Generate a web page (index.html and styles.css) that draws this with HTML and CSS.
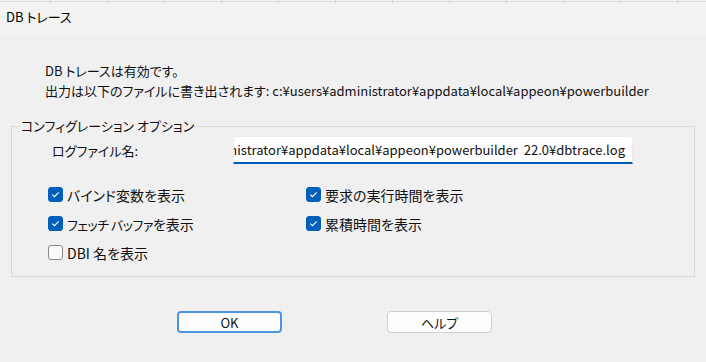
FILE: index.html
```html
<!DOCTYPE html>
<html lang="ja">
<head>
  <meta charset="UTF-8" />
  <title>DB トレース</title>
  <link rel="stylesheet" href="styles.css">
</head>
<body>
  <div class="ruler"></div>
  <div class="titlebar">DB トレース</div>

  <div class="message">
    <div>DB トレースは有効です。</div>
    <div>出力は以下のファイルに書き出されます: <span class="path">c:¥users¥administrator¥appdata¥local¥appeon¥powerbuilder</span></div>
  </div>

  <fieldset class="group">
    <legend>コンフィグレーション オプション</legend>

    <div class="field">
      <label class="field-label">ログファイル名:</label>
      <div class="textbox"><span>c:¥users¥administrator¥appdata¥local¥appeon¥powerbuilder&nbsp; 22.0¥dbtrace.log</span></div>
    </div>

    <div class="checks">
      <label class="check"><span class="box on"><svg viewBox="0 0 15 15"><path d="M3.8 7.6 L6.3 10 L11.2 5" /></svg></span><span>バインド変数を表示</span></label>
      <label class="check"><span class="box on"><svg viewBox="0 0 15 15"><path d="M3.8 7.6 L6.3 10 L11.2 5" /></svg></span><span>要求の実行時間を表示</span></label>
      <label class="check"><span class="box on"><svg viewBox="0 0 15 15"><path d="M3.8 7.6 L6.3 10 L11.2 5" /></svg></span><span><span class="kana">フェッチ バッファ</span>を表示</span></label>
      <label class="check"><span class="box on"><svg viewBox="0 0 15 15"><path d="M3.8 7.6 L6.3 10 L11.2 5" /></svg></span><span>累積時間を表示</span></label>
      <label class="check"><span class="box"></span><span>DBI 名を表示</span></label>
    </div>
  </fieldset>

  <div class="actions">
    <button class="btn default">OK</button>
    <button class="btn">ヘルプ</button>
  </div>
</body>
</html>
```

FILE: styles.css
```css
body {
  margin: 0;
  background: #f0f0f0;
  font-family: "Noto Sans CJK JP", "Noto Sans", sans-serif;
  font-size: 14px;
  font-feature-settings: "palt";
  color: #111;
  width: 706px;
  height: 362px;
  overflow: hidden;
}

/* strip of the window behind, with its column ticks */
.ruler {
  height: 3px;
  background:
    linear-gradient(#f3f3f3 0 1px, #dadada 1px 2px, #f3f3f3 2px 3px),
    #f3f3f3;
  position: relative;
}

.ruler::after {
  content: "";
  position: absolute;
  inset: 0;
  background: repeating-linear-gradient(90deg, transparent 0 50px, #d4d4d4 50px 51px, transparent 51px 57px);
}

.titlebar {
  height: 33px;
  box-sizing: border-box;
  padding: 5px 0 0 6px;
  font-size: 13px;
  line-height: 18px;
  background: #f3f3f3;
  color: #000;
}

.message {
  padding: 25px 0 0 45px;
  line-height: 20px;
  font-size: 13px;
}

.group {
  margin: 17px 0 0 11px;
  width: 684px;
  box-sizing: border-box;
  padding: 2px 10px 9px 8px;
  border: 1px solid #d9d9d9;
  min-width: 0;
}

.group legend {
  padding: 0 2px 0 1px;
  line-height: 16px;
  font-size: 13px;
}

.field {
  display: flex;
  align-items: center;
}

.field-label {
  width: 181px;
  margin-left: 32px;
  font-size: 13px;
}

.textbox {
  width: 400px;
  height: 28px;
  box-sizing: border-box;
  background: #fff;
  border: 1px solid #ececec;
  border-bottom: 2px solid #005fb8;
  border-radius: 3px 3px 0 0;
  display: flex;
  justify-content: flex-end;
  align-items: center;
  padding-right: 7px;
  overflow: hidden;
  white-space: nowrap;
  font-size: 13px;
}

.checks {
  margin: 16px 0 0 28px;
  display: grid;
  grid-template-columns: 258px 258px;
  grid-auto-rows: 29px;
}

.check {
  display: flex;
  align-items: center;
  gap: 4px;
}

.kana {
  font-size: 13px;
  letter-spacing: -0.5px;
}

.box {
  width: 15px;
  height: 15px;
  box-sizing: border-box;
  border: 1px solid #8a8a8a;
  border-radius: 3px;
  background: #fafafa;
  display: flex;
}

.box.on {
  background: #005fb8;
  border-color: #005fb8;
}

.box svg {
  width: 13px;
  height: 13px;
  fill: none;
  stroke: #fff;
  stroke-width: 1.3;
}

.actions {
  margin-top: 34px;
  padding-left: 177px;
  display: flex;
  gap: 105px;
}

.btn {
  width: 105px;
  height: 22px;
  background: #fdfdfd;
  border: 1px solid #d0d0d0;
  border-radius: 4px;
  font-family: inherit;
  font-size: 13px;
  font-feature-settings: "palt";
  color: #111;
  padding: 0;
}

.btn.default {
  border: 2px solid #4a94e0;
}
```
